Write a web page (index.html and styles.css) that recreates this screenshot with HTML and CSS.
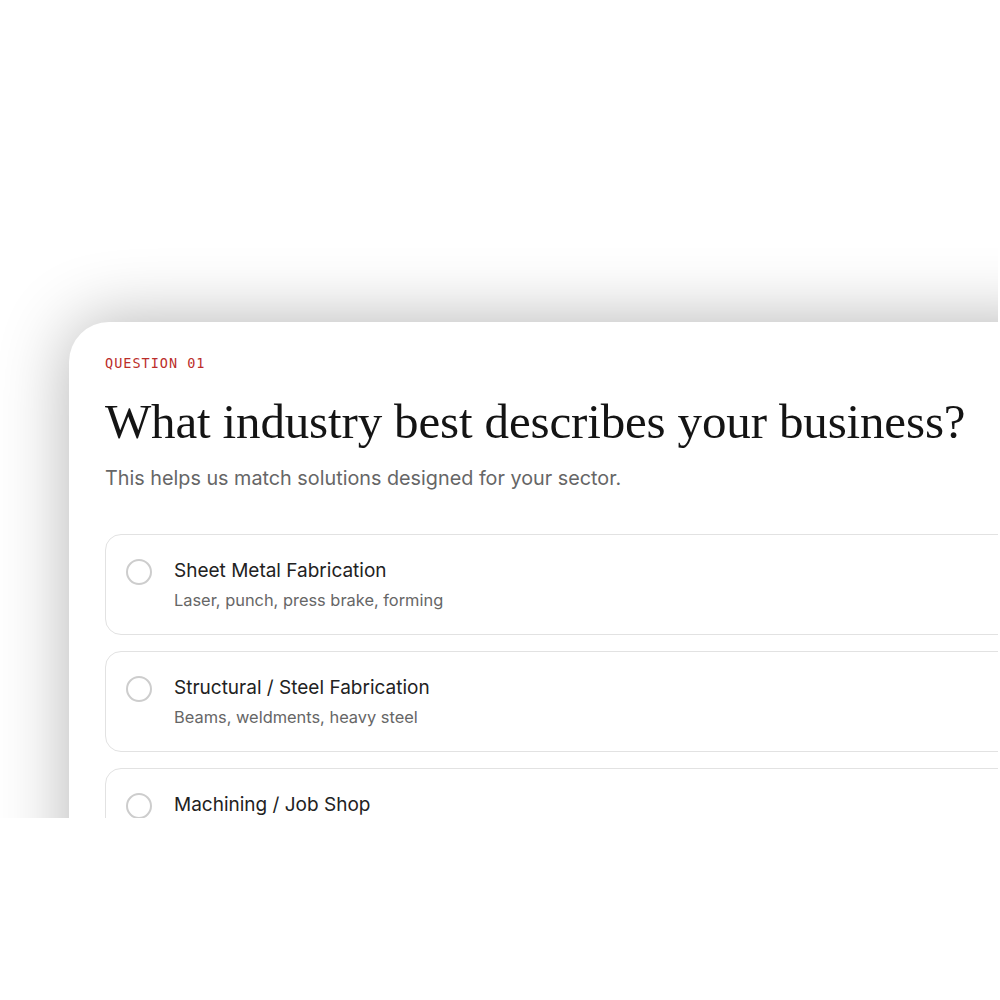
FILE: index.html
```html
<!DOCTYPE html>
<html lang="en">
<head>
  <meta charset="UTF-8">
  <title>Industry Question</title>
  <link rel="stylesheet" href="styles.css">
</head>
<body>

<div class="stage">
  <div class="quiz-card">
    <div class="eyebrow">QUESTION 01</div>
    <h1 class="question">What industry best describes your business?</h1>
    <p class="hint">This helps us match solutions designed for your sector.</p>

    <div class="options">
      <label class="option">
        <span class="radio"></span>
        <span class="option-text">
          <span class="option-title">Sheet Metal Fabrication</span>
          <span class="option-sub">Laser, punch, press brake, forming</span>
        </span>
      </label>
      <label class="option">
        <span class="radio"></span>
        <span class="option-text">
          <span class="option-title">Structural / Steel Fabrication</span>
          <span class="option-sub">Beams, weldments, heavy steel</span>
        </span>
      </label>
      <label class="option option-tall">
        <span class="radio"></span>
        <span class="option-text">
          <span class="option-title">Machining / Job Shop</span>
        </span>
      </label>
    </div>
  </div>
</div>

</body>
</html>
```

FILE: styles.css
```css
body {
  margin: 0;
  background: #fff;
  font-family: Inter, "Noto Sans", sans-serif;
}

/* visible area, the card runs off its right and bottom edges */
.stage {
  width: 998px;
  height: 818px;
  overflow: hidden;
  padding: 322px 0 0 69px;
  box-sizing: border-box;
}

.quiz-card {
  width: 1000px;
  min-height: 700px;
  background: #fff;
  border-radius: 40px 0 0 0;
  box-shadow: 0 0 70px rgba(0, 0, 0, 0.3);
  padding: 32px 0 0 36px;
  box-sizing: border-box;
}

.eyebrow {
  font-family: "DejaVu Sans Mono", monospace;
  font-size: 13.5px;
  letter-spacing: 1px;
  color: #bb2d2a;
  line-height: 18px;
}

.question {
  font-family: "Liberation Serif", "Times New Roman", serif;
  font-weight: normal;
  font-size: 49px;
  line-height: 56px;
  color: #141414;
  margin: 22px 0 0;
  letter-spacing: -0.15px;
}

.hint {
  font-size: 19.8px;
  line-height: 26px;
  color: #666;
  margin: 15px 0 0;
}

.options {
  display: flex;
  flex-direction: column;
  gap: 16px;
  margin-top: 43px;
}

.option {
  display: flex;
  align-items: flex-start;
  gap: 22px;
  border: 1px solid #e2e2e2;
  border-radius: 16px;
  padding: 24px 20px 23px;
  cursor: pointer;
}

.option-tall {
  min-height: 100px;
}

.radio {
  width: 22px;
  height: 22px;
  border: 2px solid #cdcdcd;
  border-radius: 50%;
  flex-shrink: 0;
}

.option-text {
  display: flex;
  flex-direction: column;
  gap: 6px;
}

.option-title {
  font-size: 19px;
  line-height: 24px;
  color: #222;
}

.option-sub {
  font-size: 16.4px;
  line-height: 22px;
  color: #666;
}
```
